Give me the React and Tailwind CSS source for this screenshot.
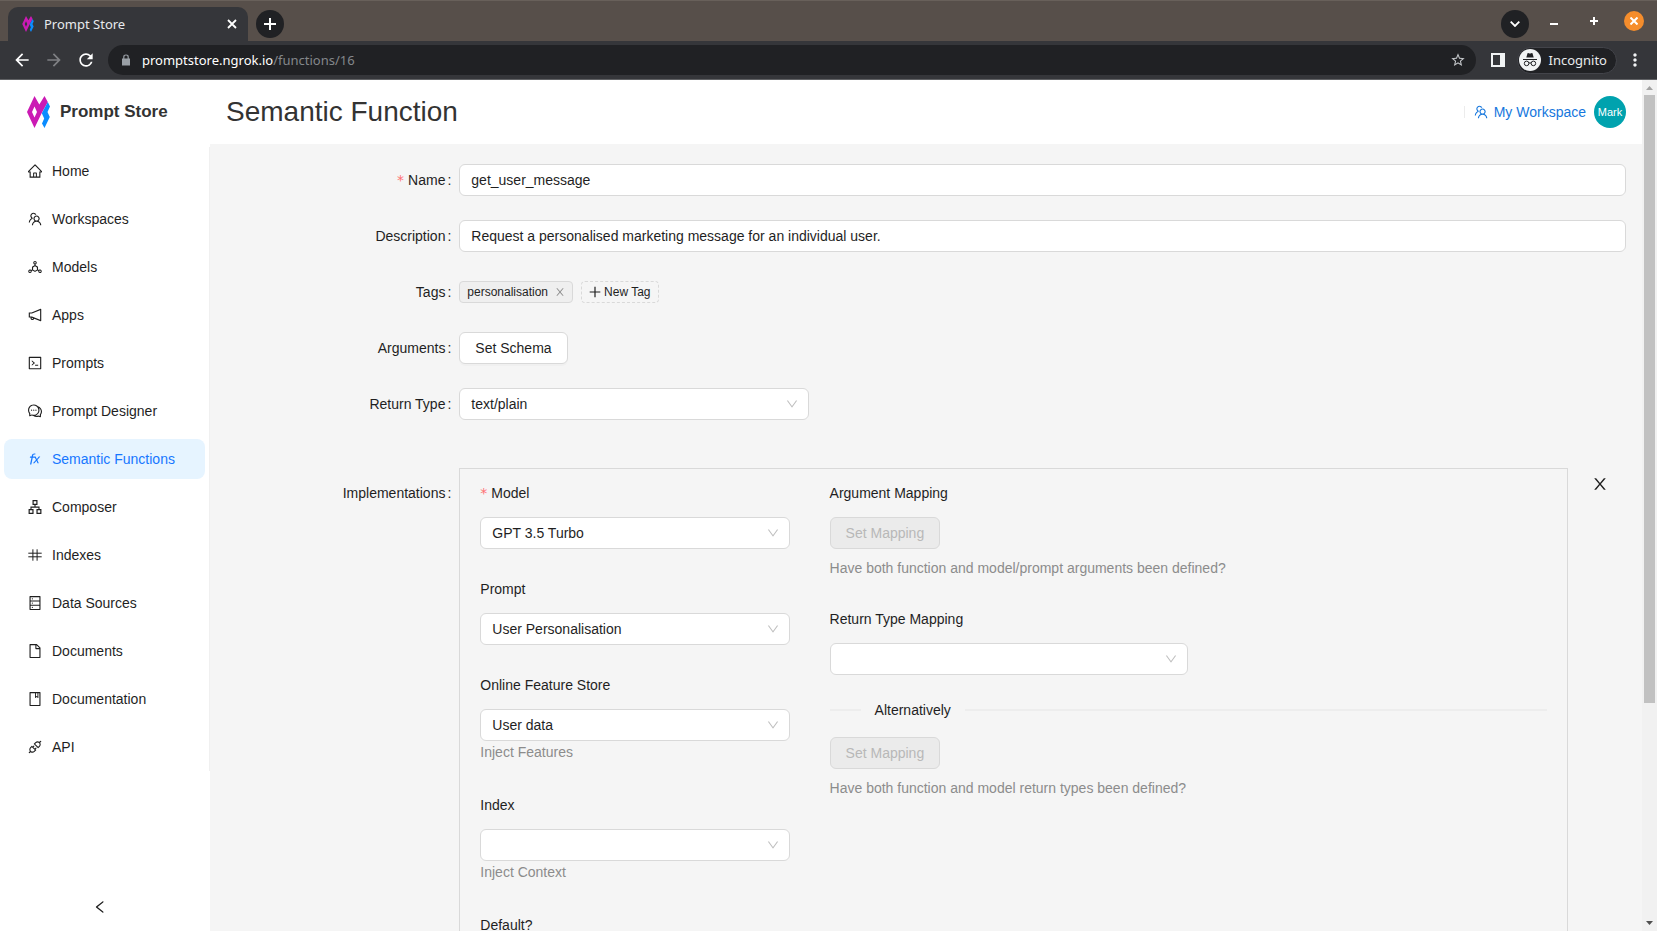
import React from "react";
import {
  AiOutlineHome,
  AiOutlineTeam,
  AiOutlineDeploymentUnit,
  AiOutlineNotification,
  AiOutlineCode,
  AiOutlineComment,
  AiOutlineFunction,
  AiOutlineApartment,
  AiOutlineDatabase,
  AiOutlineFile,
  AiOutlineBook,
  AiOutlineApi,
  AiOutlineDown,
  AiOutlineLeft,
} from "react-icons/ai";
import { MdArrowBack, MdArrowForward, MdRefresh, MdStarBorder, MdMoreVert } from "react-icons/md";

// The drawings of this icon set fill the inner part of their 1024-unit canvas.
const ICON_BOX = "64 64 896 896";

function HashIcon({ className }) {
  return (
    <svg viewBox="0 0 14 14" className={className} stroke="currentColor" aria-hidden="true">
      <path d="M.3 5.2H13.7M.3 8.8H13.7M4.9 1.3V12.7M9.1 1.3V12.7" />
    </svg>
  );
}

function CloseIcon({ className }) {
  return (
    <svg viewBox={ICON_BOX} className={className} fill="currentColor" aria-hidden="true">
      <path d="M563.8 512l262.5-312.9c4.4-5.2.7-13.1-6.1-13.1h-79.8c-4.7 0-9.2 2.1-12.3 5.7L511.6 449.8 295.1 191.7c-3-3.6-7.5-5.7-12.3-5.7H203c-6.8 0-10.5 7.9-6.1 13.1L459.4 512 196.9 824.9A7.95 7.95 0 0 0 203 838h79.8c4.7 0 9.2-2.1 12.3-5.7l216.5-258.1 216.5 258.1c3 3.6 7.5 5.7 12.3 5.7h79.8c6.8 0 10.5-7.9 6.1-13.1L563.8 512z" />
    </svg>
  );
}

const NAV = [
  { label: "Home", Icon: AiOutlineHome },
  { label: "Workspaces", Icon: AiOutlineTeam },
  { label: "Models", Icon: AiOutlineDeploymentUnit },
  { label: "Apps", Icon: AiOutlineNotification },
  { label: "Prompts", Icon: AiOutlineCode },
  { label: "Prompt Designer", Icon: AiOutlineComment },
  { label: "Semantic Functions", Icon: AiOutlineFunction, active: true },
  { label: "Composer", Icon: AiOutlineApartment },
  { label: "Indexes", Icon: HashIcon, ownBox: true },
  { label: "Data Sources", Icon: AiOutlineDatabase },
  { label: "Documents", Icon: AiOutlineFile },
  { label: "Documentation", Icon: AiOutlineBook },
  { label: "API", Icon: AiOutlineApi },
];

function Logo({ className }) {
  return (
    <svg viewBox="0 0 23 32" className={className} aria-hidden="true">
      <path fill="#cb1ab4" fillRule="evenodd" d="M7.5 0 12.3 8.6 17.5 0 20.8 6 14.5 17.5 7.5 32 0 16ZM7.5 10.5 5 16 7.5 21.5 10 16Z" />
      <path fill="#0a8cff" d="M20.8 6 23 10.5 20.5 16 22.8 21 17.5 32 15 27.5 17.2 22.5 14.8 17.2Z" />
    </svg>
  );
}

function BrowserChrome() {
  return (
    <div className="shrink-0 font-['Noto_Sans',sans-serif] text-[13px] text-[#e8eaed]">
      <div className="flex h-[41px] items-end border-t border-[#68605a] bg-[#574f4a] pl-2">
        <div className="flex h-[34px] w-60 items-center rounded-t-[10px] bg-[#35363a] pl-[14px] pr-[11px]">
          <Logo className="h-4 w-3" />
          <span className="ml-[10px] flex-1">Prompt Store</span>
          <button type="button" aria-label="Close tab">
            <svg viewBox="0 0 10 10" className="h-[10px] w-[10px]" stroke="#fff" strokeWidth="1.8">
              <path d="M1 1 9 9M9 1 1 9" />
            </svg>
          </button>
        </div>
        <div className="flex h-full flex-1 items-center pl-2 pr-[13px]">
          <button type="button" aria-label="New tab" className="mt-1.5 flex h-7 w-7 items-center justify-center rounded-full bg-[#202124]">
            <svg viewBox="0 0 12 12" className="h-3 w-3" stroke="#fff" strokeWidth="2">
              <path d="M6 0V12M0 6H12" />
            </svg>
          </button>
          <span className="flex-1" />
          <button type="button" aria-label="Search tabs" className="mt-1.5 flex h-7 w-7 items-center justify-center rounded-full bg-[#202124]">
            <svg viewBox="0 0 10 6" className="h-[6px] w-[10px]" fill="none" stroke="#fff" strokeWidth="1.8">
              <path d="M.7.7 5 5 9.3.7" />
            </svg>
          </button>
          <button type="button" aria-label="Minimize" className="ml-[21px] flex h-5 w-2 items-end justify-center pb-1.5">
            <svg viewBox="0 0 8 2" className="h-[2px] w-2" fill="#fff"><path d="M0 0H8V2H0Z" /></svg>
          </button>
          <button type="button" aria-label="Maximize" className="ml-8">
            <svg viewBox="0 0 8 8" className="h-2 w-2" stroke="#fff" strokeWidth="2"><path d="M4 0V8M0 4H8" /></svg>
          </button>
          <button type="button" aria-label="Close window" className="ml-[26px] flex h-5 w-5 items-center justify-center rounded-full bg-[#f58d2c]">
            <svg viewBox="0 0 8 8" className="h-2 w-2" stroke="#fff" strokeWidth="2"><path d="M.5.5 7.5 7.5M7.5.5.5 7.5" /></svg>
          </button>
        </div>
      </div>
      <div className="flex h-[39px] items-center border-b border-[#606164] bg-[#35363a] px-3">
        <button type="button" aria-label="Back"><MdArrowBack className="h-5 w-5 text-white" /></button>
        <button type="button" aria-label="Forward" className="ml-3"><MdArrowForward className="h-5 w-5 text-[#7f8084]" /></button>
        <button type="button" aria-label="Reload" className="ml-3"><MdRefresh className="h-5 w-5 text-white" /></button>
        <div className="ml-3 flex h-[30px] flex-1 items-center rounded-full bg-[#202124] pl-[14px] pr-[10px]">
          <svg viewBox="0 0 8 12" className="h-3 w-2" aria-hidden="true">
            <path d="M0 4.5H8V11.5H0Z" fill="#9aa0a6" />
            <path d="M1.8 5V3Q1.8 1 4 1 6.2 1 6.2 3V5" fill="none" stroke="#9aa0a6" strokeWidth="1.2" />
          </svg>
          <div className="ml-3 flex-1 text-white">
            promptstore.ngrok.io<span className="text-[#84878b]">/functions/16</span>
          </div>
          <button type="button" aria-label="Bookmark"><MdStarBorder className="h-4 w-4 text-[#c4c7ca]" /></button>
        </div>
        <button type="button" aria-label="Side panel" className="ml-[15px]">
          <svg viewBox="0 0 14 14" className="h-[14px] w-[14px]" fill="#f1f3f4" fillRule="evenodd"><path d="M0 0H14V14H0ZM2 2V12H9V2Z" /></svg>
        </button>
        <div className="ml-3 flex h-[27px] items-center rounded-full border border-[#43444a] bg-[#202124] pl-px pr-[9px]">
          <svg viewBox="0 0 22 22" className="h-[22px] w-[22px]" aria-hidden="true">
            <circle cx="11" cy="11" r="11" fill="#f1f3f4" />
            <path fill="#202124" d="M7.3 8.6 8.5 4.3Q9 3.7 9.8 4.2 11 4.7 12.2 4.2 13 3.7 13.5 4.3L14.7 8.6ZM4 10H18V11H4Z" />
            <g fill="none" stroke="#202124">
              <circle cx="7.6" cy="14.4" r="2.3" />
              <circle cx="14.4" cy="14.4" r="2.3" />
              <path d="M9.9 14.2Q11 13.4 12.1 14.2" />
            </g>
          </svg>
          <span className="ml-2">Incognito</span>
        </div>
        <button type="button" aria-label="Menu" className="ml-2"><MdMoreVert className="h-5 w-5 text-[#f1f3f4]" /></button>
      </div>
    </div>
  );
}

function Select({ id, options = [], className }) {
  return (
    <div className={"relative " + className}>
      <select id={id} className="h-8 w-full appearance-none rounded-md border border-[#d9d9d9] bg-white pl-[11px] pr-8">
        {options.length === 0 ? <option value=""></option> : options.map((o) => <option key={o}>{o}</option>)}
      </select>
      <AiOutlineDown viewBox={ICON_BOX} className="pointer-events-none absolute right-[11px] top-[10px] h-3 w-3 text-[#bfbfbf]" />
    </div>
  );
}

function Star() {
  return <span className="mr-1 font-['DejaVu_Sans',sans-serif] text-[#ff7073]">*</span>;
}

function Row({ label, id, required, children }) {
  return (
    <div className="mb-6 flex">
      <label htmlFor={id} className="flex h-8 w-1/6 items-center justify-end pr-2">
        {required && <Star />}
        {label}
        <span className="ml-[2px]">:</span>
      </label>
      <div className="flex min-h-8 w-5/6 items-center">{children}</div>
    </div>
  );
}

function Field({ label, id, required, help, children }) {
  return (
    <div className="mb-6">
      <label htmlFor={id} className="mb-2 flex h-8 items-center">
        {required && <Star />}
        {label}
      </label>
      {children}
      {help && <p className="h-6 text-[#8c8c8c]">{help}</p>}
    </div>
  );
}

function MappingButton({ id }) {
  return (
    <button id={id} type="button" disabled className="block h-8 rounded-md border border-[#d9d9d9] bg-[#ebebeb] px-[15px] text-[#b8b8b8]">
      Set Mapping
    </button>
  );
}

function Sidebar() {
  return (
    <aside className="flex w-[210px] shrink-0 flex-col bg-white pt-[3px]">
      <nav className="flex flex-col gap-2 border-r border-[#f0f0f0] p-1">
        {NAV.map(({ label, Icon, active, ownBox }) => (
          <a
            key={label}
            href="#"
            className={"flex h-10 items-center rounded-lg pl-6 " + (active ? "bg-[#e6f4ff] text-[#1677ff]" : "text-[#1f1f1f]")}
          >
            {ownBox ? <Icon className="h-[14px] w-[14px]" /> : <Icon viewBox={ICON_BOX} className="h-[14px] w-[14px]" />}
            <span className="ml-[10px]">{label}</span>
          </a>
        ))}
      </nav>
      <button type="button" aria-label="Collapse sidebar" className="mt-auto flex h-12 w-[200px] items-center justify-center">
        <AiOutlineLeft viewBox={ICON_BOX} className="h-[14px] w-[14px] text-[#1f1f1f]" />
      </button>
    </aside>
  );
}

function Scrollbar() {
  return (
    <div className="flex w-[15px] shrink-0 flex-col items-center bg-[#f1f1f1]" aria-hidden="true">
      <svg viewBox="0 0 15 15" className="h-[15px] w-[15px] shrink-0" fill="#a3a3a3"><path d="M4 10 7.5 6 11 10Z" /></svg>
      <div className="w-full flex-1 px-[2px]">
        <div className="h-[74%] bg-[#c1c1c1]" />
      </div>
      <svg viewBox="0 0 15 15" className="h-[15px] w-[15px] shrink-0" fill="#505050"><path d="M4 5 7.5 9 11 5Z" /></svg>
    </div>
  );
}

export default function App() {
  return (
    <div className="flex h-screen flex-col overflow-hidden bg-white font-['Liberation_Sans',Arial,sans-serif] text-sm leading-[22px] text-[#1f1f1f]">
      <BrowserChrome />
      <div className="flex min-h-0 flex-1">
        <div className="flex min-w-0 flex-1 flex-col">
          <header className="flex h-16 shrink-0 items-center pr-4">
            <div className="flex w-[226px] items-center pl-[27px]">
              <Logo className="h-8 w-[23px]" />
              <span className="ml-[10px] text-[17px] font-bold text-[#333333]">Prompt Store</span>
            </div>
            <h1 className="flex-1 text-[28px] text-[#333333]">Semantic Function</h1>
            <a href="#" className="flex items-center text-[#1677dd]">
              <span className="h-3 w-px bg-[#ececec]" />
              <AiOutlineTeam viewBox={ICON_BOX} className="ml-[9px] mr-[6px] h-[14px] w-[14px]" />
              My Workspace
            </a>
            <span className="ml-2 flex h-8 w-8 items-center justify-center rounded-full bg-[#00a2ae] text-[11px] text-white">Mark</span>
          </header>
          <div className="flex min-h-0 flex-1">
            <Sidebar />
            <main className="min-w-0 flex-1 overflow-hidden bg-[#f5f5f5] px-4 pt-5">
              <form>
                <Row label="Name" id="name" required>
                  <input id="name" defaultValue="get_user_message" className="h-8 w-full rounded-md border border-[#d9d9d9] bg-white px-[11px]" />
                </Row>
                <Row label="Description" id="description">
                  <input
                    id="description"
                    defaultValue="Request a personalised marketing message for an individual user."
                    className="h-8 w-full rounded-md border border-[#d9d9d9] bg-white px-[11px]"
                  />
                </Row>
                <Row label="Tags" id="new-tag">
                  <div className="flex gap-2 text-xs">
                    <span className="flex h-[22px] items-center rounded border border-[#d9d9d9] bg-[#efefef] px-[7px]">
                      personalisation
                      <button type="button" aria-label="Remove tag" className="ml-[7px]">
                        <CloseIcon className="h-[10px] w-[10px] text-[#8c8c8c]" />
                      </button>
                    </span>
                    <button id="new-tag" type="button" className="flex h-[22px] items-center rounded border border-dashed border-[#d9d9d9] px-[7px]">
                      <svg viewBox="0 0 12 12" className="mr-[3px] h-3 w-3" stroke="currentColor" strokeWidth="1.2" aria-hidden="true">
                        <path d="M6 .7V11.3M.7 6H11.3" />
                      </svg>
                      New Tag
                    </button>
                  </div>
                </Row>
                <Row label="Arguments" id="arguments">
                  <button id="arguments" type="button" className="h-8 rounded-md border border-[#d9d9d9] bg-white px-[15px] shadow-[0_2px_0_rgba(0,0,0,0.02)]">
                    Set Schema
                  </button>
                </Row>
                <Row label="Return Type" id="return-type">
                  <Select id="return-type" options={["text/plain"]} className="w-[30%]" />
                </Row>
                <div className="mt-12 flex">
                  <div className="mt-[9px] flex h-8 w-1/6 items-center justify-end pr-2">
                    Implementations<span className="ml-[2px]">:</span>
                  </div>
                  <div className="flex min-w-0 flex-1 gap-10 border border-[#d9d9d9] px-5 pt-2">
                    <div className="w-[29%]">
                      <Field label="Model" id="model" required>
                        <Select id="model" options={["GPT 3.5 Turbo"]} className="w-full" />
                      </Field>
                      <Field label="Prompt" id="prompt">
                        <Select id="prompt" options={["User Personalisation"]} className="w-full" />
                      </Field>
                      <Field label="Online Feature Store" id="feature-store" help="Inject Features">
                        <Select id="feature-store" options={["User data"]} className="w-full" />
                      </Field>
                      <Field label="Index" id="index" help="Inject Context">
                        <Select id="index" className="w-full" />
                      </Field>
                      <Field label="Default?" id="default">
                        <input id="default" type="checkbox" />
                      </Field>
                    </div>
                    <div className="min-w-0 flex-1">
                      <Field label="Argument Mapping" id="argument-mapping">
                        <MappingButton id="argument-mapping" />
                        <p className="mt-2 text-[#8c8c8c]">Have both function and model/prompt arguments been defined?</p>
                      </Field>
                      <Field label="Return Type Mapping" id="return-mapping">
                        <Select id="return-mapping" className="w-1/2" />
                      </Field>
                      <div className="mb-4 flex items-center">
                        <span className="h-[2px] w-[31px] bg-[#ededed]" />
                        <span className="px-[14px]">Alternatively</span>
                        <span className="h-[2px] flex-1 bg-[#ededed]" />
                      </div>
                      <MappingButton id="alternative-mapping" />
                      <p className="mt-2 text-[#8c8c8c]">Have both function and model return types been defined?</p>
                    </div>
                  </div>
                  <div className="w-1/24 pl-6 pt-2">
                    <button type="button" aria-label="Remove implementation" className="block">
                      <CloseIcon className="h-4 w-4" />
                    </button>
                  </div>
                </div>
              </form>
            </main>
          </div>
        </div>
        <Scrollbar />
      </div>
    </div>
  );
}
